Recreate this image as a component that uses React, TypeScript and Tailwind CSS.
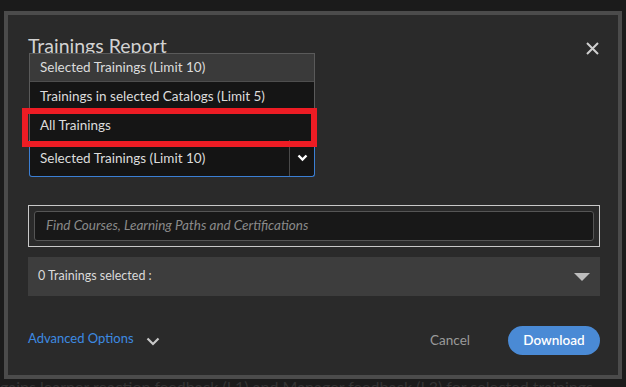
import React from "react";

export default function App() {
  const font = { fontFamily: "Lato, 'Open Sans', sans-serif" };
  return (
    <div className="relative w-[626px] h-[387px] overflow-hidden bg-[#1b1b1b]" style={font}>
      {/* page behind the modal */}
      <div className="absolute left-0 top-[376px] whitespace-nowrap text-[16px] leading-[22px] text-[#333333]">
        gains learner reaction feedback (L1) and Manager feedback (L3) for selected trainings
      </div>

      {/* modal */}
      <div className="absolute left-[4px] top-[11px] w-[618px] h-[368px] border-4 border-[#4b4b4b] bg-[#2a2a2a]">
        <div className="flex flex-col px-[20px]">
          {/* header */}
          <div className="flex items-start justify-between h-[125px] pt-[17px]">
            <h1 className="text-[19.5px] leading-[28px] text-[#d2d2d2]">Trainings Report</h1>
            <button className="mt-[10px] mr-[-1px] text-[#cfcfcf]">
              <svg width="13" height="13" viewBox="0 0 13 13">
                <path d="M1 1 L12 12 M12 1 L1 12" stroke="currentColor" strokeWidth="2" />
              </svg>
            </button>
          </div>

          {/* select with open list */}
          <div className="relative ml-[1px] w-[286px]">
            <div className="absolute bottom-full left-0 w-[286px] flex flex-col border border-b-0 border-[#5a5a5a] text-[13.5px] text-[#dcdcdc]">
              <div className="h-[28px] flex items-center pl-[10px] bg-[#3a3a3a] border-b border-[#4e4e4e]">
                Selected Trainings (Limit 10)
              </div>
              <div className="h-[29px] flex items-center pl-[10px] bg-[#151515]">
                Trainings in selected Catalogs (Limit 5)
              </div>
              <div className="h-[29px] flex items-center pl-[10px] bg-[#151515]">
                All Trainings
              </div>
            </div>
            <div className="h-[37px] flex items-center bg-[#141414] border border-t-0 border-[#3b7fd4] rounded-b-[3px] text-[13.5px] text-[#dcdcdc]">
              <span className="flex-1 pl-[10px]">Selected Trainings (Limit 10)</span>
              <div className="w-[25px] h-full flex items-center justify-center border-l border-[#4a4a4a]">
                <svg width="11" height="8" viewBox="0 0 11 8">
                  <path d="M1.5 1.5 L5.5 5.5 L9.5 1.5" stroke="#ffffff" strokeWidth="2.4" fill="none" />
                </svg>
              </div>
            </div>
            {/* red highlight */}
            <div className="absolute left-[-7px] top-[-32px] w-[295px] h-[39px] border-[6px] border-[#ed1c24]" />
          </div>

          {/* search */}
          <div className="mt-[28px] w-[572px] h-[42px] border border-[#c8c8c8] p-[5px]">
            <div className="h-full flex items-center rounded-[3px] border border-[#555555] bg-[#181818] pl-[11px]">
              <span className="italic text-[13.5px] text-[#8a8a8a] mt-[-2px]">
                Find Courses, Learning Paths and Certifications
              </span>
            </div>
          </div>

          {/* selected bar */}
          <div className="mt-[10px] w-[572px] h-[39px] flex items-center justify-between bg-[#3d3d3d] pl-[10px] pr-[10px]">
            <span className="text-[12.5px] text-[#dadada]">0 Trainings selected :</span>
            <svg width="16" height="8" viewBox="0 0 16 8">
              <path d="M0 0 L16 0 L8 8 Z" fill="#bdbdbd" />
            </svg>
          </div>

          {/* footer */}
          <div className="mt-[30px] w-[572px] h-[29px] flex items-center justify-between">
            <div className="flex items-center">
              <span className="text-[13px] text-[#3d8ae2] mt-[-3px]">Advanced Options</span>
              <svg className="ml-[12px] mt-[1px]" width="14" height="9" viewBox="0 0 14 9">
                <path d="M1.5 1.5 L7 7 L12.5 1.5" stroke="#c8c8c8" strokeWidth="2.2" fill="none" />
              </svg>
            </div>
            <div className="flex items-center">
              <span className="text-[13.5px] text-[#9a9a9a] mr-[38px]">Cancel</span>
              <button className="w-[92px] h-[29px] rounded-full bg-[#4a8ad5] text-[13.5px] font-semibold text-white">
                Download
              </button>
            </div>
          </div>
        </div>
      </div>
    </div>
  );
}
